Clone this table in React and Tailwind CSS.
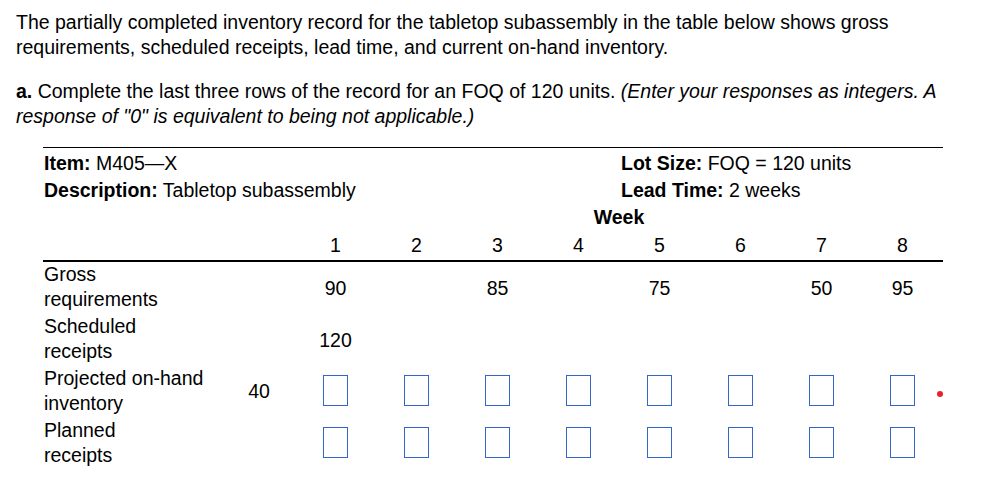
import React from "react";

const weeks = [1, 2, 3, 4, 5, 6, 7, 8];
const gross = { 1: "90", 3: "85", 5: "75", 7: "50", 8: "95" };
const sched = { 1: "120" };

function Box() {
  return <div className="w-[25px] h-[31px] border border-[#3366cc] bg-white mb-[3px]" />;
}

function Row({ label1, label2, init, cells, children }) {
  return (
    <div className="relative grid grid-cols-[180px_72px_repeat(8,81px)] h-[52px]">
      <div className="pl-[1px] leading-[25px] whitespace-nowrap">
        <div>{label1}</div>
        <div>{label2}</div>
      </div>
      <div className="flex items-center justify-center">{init}</div>
      {weeks.map((w) => (
        <div key={w} className="flex items-center justify-center">
          {cells(w)}
        </div>
      ))}
      {children}
    </div>
  );
}

export default function App() {
  return (
    <div
      className="w-[991px] h-[504px] bg-white text-black text-[19.5px] leading-[25px]"
      style={{ fontFamily: '"Liberation Sans", Arial, sans-serif' }}
    >
      <div className="pl-[16px] pt-[10px] pr-2 whitespace-nowrap">
        <p>
          The partially completed inventory record for the tabletop subassembly in the table below shows gross
          <br />
          requirements, scheduled receipts, lead time, and current on-hand inventory.
        </p>
        <p className="mt-[19px]">
          <b>a.</b> Complete the last three rows of the record for an FOQ of 120 units.{" "}
          <i>(Enter your responses as integers. A</i>
          <br />
          <i>response of "0" is equivalent to being not applicable.)</i>
        </p>
      </div>

      <div className="ml-[43px] mt-[18px] w-[900px] border-t border-black whitespace-nowrap">
        <div className="flex h-[30px] pt-[3px]">
          <div className="w-[578px] pl-[1px]">
            <b>Item:</b> M405—X
          </div>
          <div>
            <b>Lot Size:</b> FOQ = 120 units
          </div>
        </div>
        <div className="flex h-[28px]">
          <div className="w-[578px] pl-[1px]">
            <b>Description:</b> Tabletop subassembly
          </div>
          <div>
            <b>Lead Time:</b> 2 weeks
          </div>
        </div>
        <div className="grid grid-cols-[252px_648px] h-[23px] leading-[23px]">
          <div />
          <div className="text-center font-bold">Week</div>
        </div>
        <div className="grid grid-cols-[180px_72px_repeat(8,81px)] h-[33px] pt-[4px] border-b-2 border-black">
          <div />
          <div />
          {weeks.map((w) => (
            <div key={w} className="text-center">
              {w}
            </div>
          ))}
        </div>

        <Row label1="Gross" label2="requirements" init="" cells={(w) => gross[w] || ""} />
        <Row label1="Scheduled" label2="receipts" init="" cells={(w) => sched[w] || ""} />
        <Row
          label1="Projected on-hand"
          label2="inventory"
          init={<span className="mb-[2px]">40</span>}
          cells={() => <Box />}
        >
          <div className="absolute left-[894px] top-[25px] w-[6px] h-[6px] rounded-full bg-[#e8212a]" />
        </Row>
        <Row label1="Planned" label2="receipts" init="" cells={() => <Box />} />
      </div>
    </div>
  );
}
